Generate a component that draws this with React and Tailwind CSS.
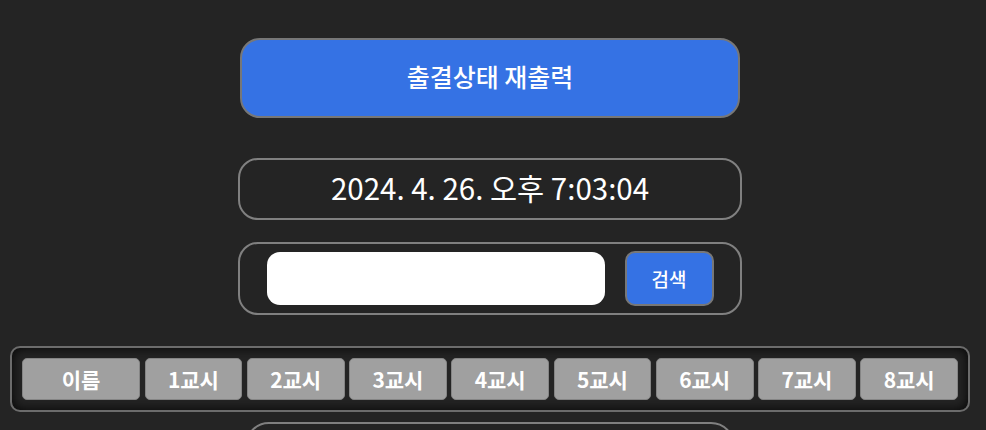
const periods = ['1교시', '2교시', '3교시', '4교시', '5교시', '6교시', '7교시', '8교시']

export default function App() {
  return (
    <div
      className="min-h-[430px] bg-[#242424] text-white"
      style={{ fontFamily: '"Noto Sans CJK KR", "Noto Sans", sans-serif' }}
    >
      <div className="w-[980px] flex flex-col items-center pt-[38px]">
        <button className="w-[500px] h-[80px] rounded-[20px] border-2 border-[#777] bg-[#3572e4] text-[25px] font-medium text-white leading-none pb-[4px]">
          출결상태 재출력
        </button>

        <div className="mt-[40px] w-[504px] h-[62px] rounded-[20px] border-2 border-[#808080] flex items-center justify-center text-[29.5px] leading-none pb-[3px]">
          2024. 4. 26. 오후 7:03:04
        </div>

        <div className="mt-[22px] w-[504px] h-[73px] rounded-[20px] border-2 border-[#808080] flex items-center justify-center gap-[20px]">
          <input className="w-[338px] h-[53px] rounded-[13px] bg-white text-black px-3 outline-none" />
          <button className="w-[89px] h-[55px] rounded-[10px] border-2 border-[#777] bg-[#3572e4] text-[19px] font-medium text-white leading-none">
            검색
          </button>
        </div>

        <div className="mt-[31px] w-[960px] h-[66px] rounded-[10px] border-2 border-[#6c6c6c] shadow-[inset_0_0_12px_rgba(0,0,0,0.9)] px-[10px] flex items-center gap-[4.6px]">
          <div className="w-[118px] h-[42px] rounded-[5px] border border-[#858585] bg-[#a0a0a0] flex items-center justify-center text-[21px] font-bold leading-none">
            이름
          </div>
          {periods.map((p) => (
            <div
              key={p}
              className="flex-1 h-[42px] rounded-[5px] border border-[#858585] bg-[#a0a0a0] flex items-center justify-center text-[21px] font-bold leading-none"
            >
              {p}
            </div>
          ))}
        </div>

        <div className="mt-[10px] w-[490px] h-[60px] rounded-[24px] border-2 border-[#808080]" />
      </div>
    </div>
  )
}
